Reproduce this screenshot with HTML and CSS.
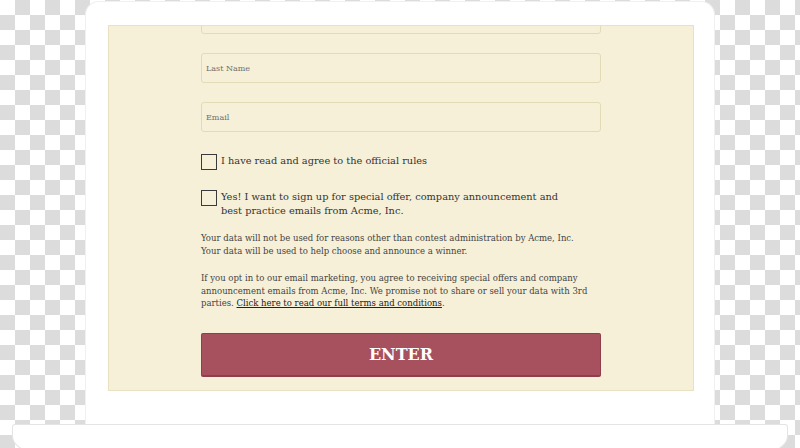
FILE: index.html
```html
<!DOCTYPE html>
<html lang="en">

<head>
    <meta charset="UTF-8">
    <title>Contest Entry</title>
    <link rel="stylesheet" href="styles.css">
</head>

<body>
    <div class="device">
        <div class="lid">
            <div class="screen">
                <form class="entry-form" onsubmit="return false">
                    <input class="field" type="text" placeholder="First Name">
                    <input class="field" type="text" placeholder="Last Name">
                    <input class="field field-last" type="email" placeholder="Email">

                    <label class="check-row">
                        <input class="check" type="checkbox">
                        <span>I have read and agree to the official rules</span>
                    </label>
                    <label class="check-row second">
                        <input class="check" type="checkbox">
                        <span>Yes! I want to sign up for special offer, company announcement and<br>best practice emails from Acme, Inc.</span>
                    </label>

                    <p class="note">Your data will not be used for reasons other than contest administration by Acme, Inc.<br>Your data will be used to help choose and announce a winner.</p>
                    <p class="note second">If you opt in to our email marketing, you agree to receiving special offers and company<br>announcement emails from Acme, Inc. We promise not to share or sell your data with 3rd<br>parties. <a href="#">Click here to read our full terms and conditions</a>.</p>

                    <button class="enter-btn" type="submit">ENTER</button>
                </form>
            </div>
        </div>
        <div class="base"></div>
    </div>
</body>

</html>
```

FILE: styles.css
```css
body {
    margin: 0;
    width: 800px;
    height: 448px;
    overflow: hidden;
    font-family: 'DejaVu Serif', 'Liberation Serif', serif;
    background: repeating-conic-gradient(#dcdcdc 0 25%, #fff 0 50%) 0 0 / 30px 30px;
}

.device {
    padding-top: 1px;
}

.lid {
    margin: 0 85px;
    height: 423px;
    box-sizing: border-box;
    padding: 23px 20px 0 22px;
    background-color: #fff;
    border: 1px solid #f0f0f0;
    border-bottom: none;
    border-radius: 14px 14px 0 0;
}

.screen {
    height: 366px;
    box-sizing: border-box;
    background-color: #f6f0d8;
    border: 1px solid #e9e1c2;
    overflow: hidden;
}

.entry-form {
    width: 400px;
    margin: -22px auto 0;
}

.field {
    display: block;
    width: 100%;
    height: 30px;
    box-sizing: border-box;
    margin: 0 0 19px;
    padding: 0 4px;
    background: transparent;
    border: 1px solid #e3dab8;
    border-radius: 3px;
    font-family: inherit;
    font-size: 8px;
    color: #555;
}

.field::placeholder {
    color: #6f6f6f;
}

.field-last {
    margin-bottom: 22px;
}

.check-row {
    display: flex;
    align-items: flex-start;
    gap: 4px;
    font-size: 9.8px;
    line-height: 14px;
    color: #333;
}

.check-row.second {
    margin-top: 20px;
}

.check {
    appearance: none;
    flex: none;
    width: 16px;
    height: 16px;
    margin: 0;
    box-sizing: border-box;
    border: 1.5px solid #3a3a3a;
    background: transparent;
}

.note {
    margin: 14px 0 0;
    font-size: 8.5px;
    line-height: 12.5px;
    white-space: nowrap;
    color: #444;
}

.note.second {
    margin-top: 15px;
}

.note a {
    color: #222;
    text-decoration: underline;
}

.enter-btn {
    display: block;
    width: 100%;
    height: 44px;
    margin-top: 23px;
    background-color: #a8515e;
    border: 1px solid #8f3f4b;
    border-bottom-width: 2px;
    border-radius: 2px;
    color: #fff;
    font-family: inherit;
    font-size: 16px;
    font-weight: bold;
    cursor: pointer;
}

.base {
    margin: 0 12px;
    height: 26px;
    background-color: #fff;
    border: 1px solid #e4e4e4;
    border-radius: 3px 3px 22px 22px / 3px 3px 16px 16px;
}
```
